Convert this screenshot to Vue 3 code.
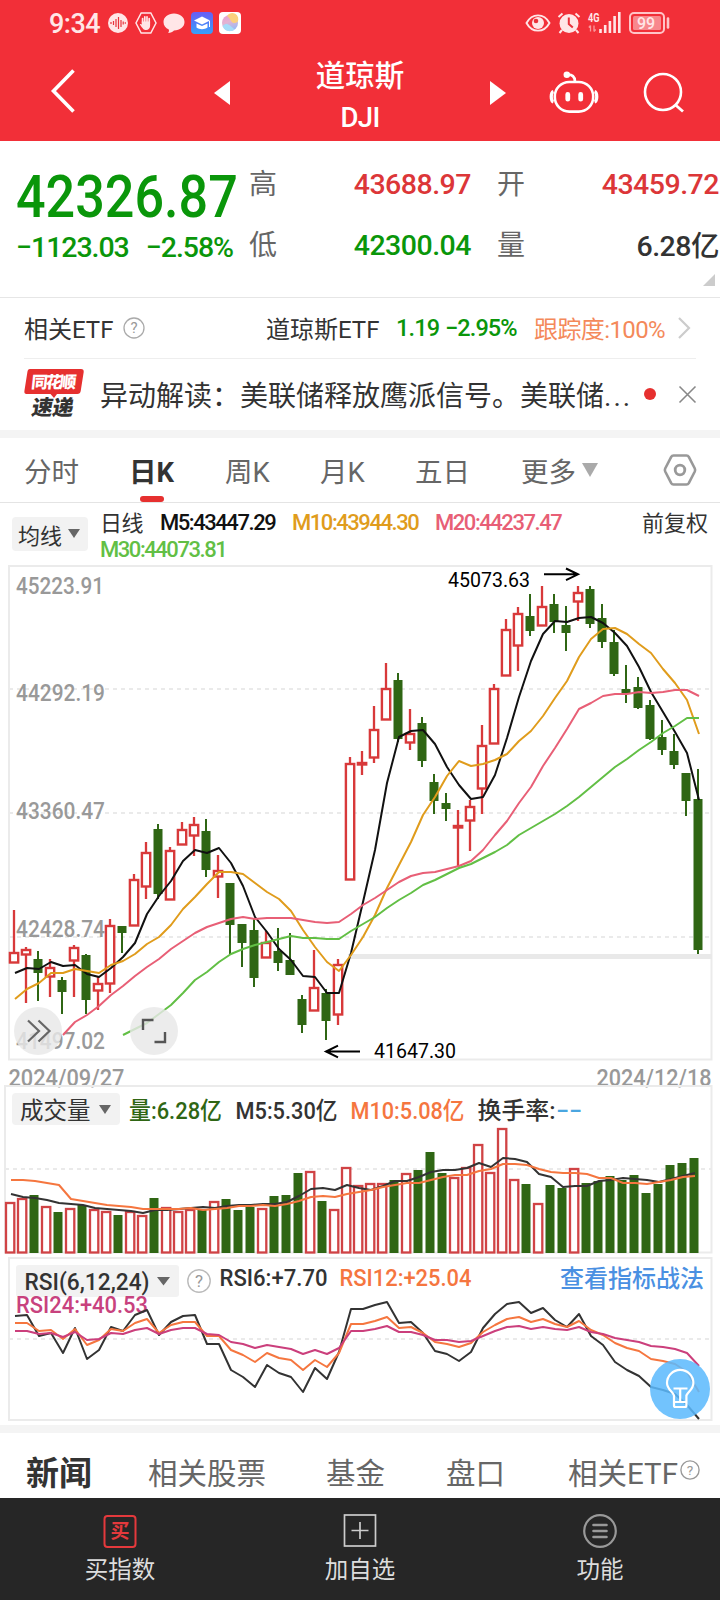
<template>
  <div class="page">
    <header class="header">
      <div class="status">
        <span class="time">9:34</span>
        <svg class="ico-wave" width="20" height="22" viewBox="0 0 20 22">
          <circle cx="10" cy="11" r="10" fill="#ffe6e7" />
          <path d="M3 10v2M5.5 9v4M8 7v8M10.500 5v12M13 8v7M15.200 9.500v3M17.300 10.300v1.400" stroke="#e8323b" stroke-width="1.200" />
        </svg>
        <svg class="ico-hand" width="22" height="22" viewBox="0 0 22 22">
          <path d="M6.2 1h9.6L21 11l-5.2 10H6.2L1 11z" fill="none" stroke="#ffe6e7" stroke-width="1.5" />
          <path d="M7.6 11V6.5M9.8 10V4.8M12 10V4.8M14.2 11V6.5" stroke="#ffe6e7" stroke-width="1.7" stroke-linecap="round" />
          <path d="M6.8 9.5h8.3v4.2c0 2.4-1.6 4.3-4 4.3-2.3 0-3.3-1.4-6.2-5.6.7-.9 1.3-.5 1.9.2z" fill="#ffe6e7" />
        </svg>
        <svg class="ico-chat" width="22" height="22" viewBox="0 0 22 22">
          <path d="M11 1.5c6 0 10.500 3.600 10.500 8.500s-4.500 8.500-10.500 8.500c-1.300 1.400-3.300 2.300-6 2.500 1-1 1.200-2.200.8-3.500C2.500 16.200.5 13.500.5 10 .5 5.100 5 1.500 11 1.500z" fill="#ffe6e7" />
        </svg>
        <svg class="ico-app" width="22" height="22" viewBox="0 0 22 22">
          <defs>
            <linearGradient id="cap" x1="0" y1="0" x2="0" y2="1">
              <stop offset="0" stop-color="#6a5cf5" />
              <stop offset="1" stop-color="#35a0fa" />
            </linearGradient>
            <linearGradient id="ball" x1="0" y1="0" x2="0.4" y2="1">
              <stop offset="0" stop-color="#e99ad0" />
              <stop offset=".5" stop-color="#e3b4d2" />
              <stop offset="1" stop-color="#9db9f4" />
            </linearGradient>
          </defs>
          <rect width="22" height="22" rx="4" fill="url(#cap)" />
          <path d="M11 4.500l8 4-8 4-8-4z" fill="#fff" />
          <path d="M5.500 11.500l5.500 2.500 5.500-2.500v4c-3 2.300-8 2.300-11 0zM18 9h1v6h-1z" fill="#fff" />
        </svg>
        <svg class="ico-app" width="22" height="22" viewBox="0 0 22 22">
          <rect width="22" height="22" rx="4" fill="#fff" />
          <circle cx="11" cy="11" r="8" fill="url(#ball)" />
          <path d="M8 4a6 6 0 0 1 10.500 6c-2 1-3.500 1.500-5 .5-2-1.500-2-3.500-5.500-6.500z" fill="#fbd07e" />
          <path d="M3.500 14c3-3 5-2.500 7.500-.5s4 3.500 4.500 4c-4 3-10 2-12-3.500z" fill="#a5dcf8" />
        </svg>
        <span class="grow"></span>
        <svg class="ico-eye" width="26" height="20" viewBox="0 0 26 20">
          <path d="M1.500 10C7-.2 19-.2 24.500 10 19 20.200 7 20.200 1.500 10z" fill="none" stroke="#ffe6e7" stroke-width="1.900" />
          <circle cx="13" cy="10" r="6" fill="#ffe6e7" />
          <circle cx="11" cy="8" r="2.300" fill="#e8323b" />
        </svg>
        <svg class="ico-alarm" width="24" height="22" viewBox="0 0 24 22">
          <circle cx="12" cy="11.500" r="9.500" fill="#ffe6e7" />
          <path d="M1.500 5L5.500 1.500M22.500 5l-4-3.500M5 18l-2.500 3M19 18l2.500 3" stroke="#ffe6e7" stroke-width="2" />
          <path d="M11.800 5.500v6.500l4 3.500" fill="none" stroke="#e8323b" stroke-width="2" />
        </svg>
        <svg class="ico-signal" width="34" height="22" viewBox="0 0 34 22">
          <text x="0" y="9.500" class="net" textLength="11.500" lengthAdjust="spacingAndGlyphs">4G</text>
          <path d="M2.500 13.500v6M.800 15.500l1.700-2M6 13.500v6M7.700 17.500L6 19.500" stroke="#f9989c" stroke-width="1.300" />
          <path d="M12.500 17v4M17.200 13v8M21.900 9v12M26.600 4v17M31.300 0v21" stroke="#ffe6e7" stroke-width="2.600" />
        </svg>
        <svg class="ico-battery" width="42" height="22" viewBox="0 0 42 22">
          <rect x="1" y="1" width="34" height="20" rx="4" fill="none" stroke="#ffc4c7" stroke-width="2" />
          <rect x="4" y="4" width="28" height="14" rx="1.500" fill="#f8888d" />
          <text x="8" y="16.500" class="level">99</text>
          <path d="M39 6.500v9" stroke="#ffc4c7" stroke-width="2.600" stroke-linecap="round" />
        </svg>
      </div>
      <div class="nav">
        <svg class="back" width="30" height="50" viewBox="0 0 30 50">
          <path d="M26.500 4.500L6.500 25l20 20.500" fill="none" stroke="#fff" stroke-width="3.600" />
        </svg>
        <svg class="prev" width="16" height="24" viewBox="0 0 16 24"><path d="M16 0v24L0 12z" fill="#fff" /></svg>
        <div class="title">
          <div class="name">道琼斯</div>
          <div class="code">DJI</div>
        </div>
        <svg width="16" height="24" viewBox="0 0 16 24"><path d="M0 0v24l16-12z" fill="#fff" /></svg>
        <svg class="robot" width="50" height="46" viewBox="0 0 52 48">
          <rect x="6" y="13.500" width="40" height="31" rx="15" fill="none" stroke="#fff" stroke-width="2.700" />
          <path d="M4.500 23.500c-3 1-3 10 0 11M47.500 23.500c3 1 3 10 0 11" fill="none" stroke="#fff" stroke-width="3.400" />
          <path d="M19 6c5-.5 8 2 8 7" fill="none" stroke="#fff" stroke-width="2.800" />
          <circle cx="18.500" cy="6" r="3.400" fill="#fff" />
          <path d="M19.500 26.500v5M33 26.500v5" stroke="#fff" stroke-width="5" stroke-linecap="round" />
        </svg>
        <svg class="search" width="44" height="44" viewBox="0 0 44 44">
          <circle cx="21" cy="21" r="18" fill="none" stroke="#fff" stroke-width="2.600" />
          <path d="M33 33.500l8 7" stroke="#fff" stroke-width="2.800" />
        </svg>
      </div>
    </header>

    <section class="quote">
      <div class="price-col">
        <div class="price">42326.87</div>
        <div class="change"><span>−1123.03</span><span class="pct">−2.58%</span></div>
      </div>
      <div class="stats">
        <span class="key">高</span><span class="val red">43688.97</span>
        <span class="key">开</span><span class="val red">43459.72</span>
        <span class="key">低</span><span class="val green">42300.04</span>
        <span class="key">量</span><span class="val dark">6.28亿</span>
      </div>
      <i class="corner"></i>
    </section>

    <section class="etf">
      <span class="etf-label">相关ETF</span>
      <svg class="help" width="22" height="22" viewBox="0 0 22 22">
        <circle cx="11" cy="11" r="10" fill="none" stroke="#aaa" stroke-width="1.300" />
        <text x="11" y="16" class="q">?</text>
      </svg>
      <span class="etf-name">道琼斯ETF</span>
      <span class="etf-num green">1.19</span>
      <span class="etf-pct green">−2.95%</span>
      <span class="etf-track">跟踪度:100%</span>
      <svg class="chev" width="14" height="22" viewBox="0 0 14 22">
        <path d="M1 1l10 10-10 10" fill="none" stroke="#ccc" stroke-width="2.200" />
      </svg>
    </section>

    <section class="news">
      <svg class="logo" width="60" height="52" viewBox="0 0 60 52">
        <path d="M6 1h51q3 0 2.700 3l-3 19q-.4 3-3.500 3H33l-3 4-3.500-4H2.500Q0 26 .400 23l3-19Q3.700 1 6 1z" fill="#e6302f" />
        <text x="0" y="20.500" class="logo-a" transform="translate(9 0) skewX(-6)" textLength="45">同花顺</text>
        <text x="0" y="47.500" class="logo-b" transform="translate(15 0) skewX(-10)" textLength="42">速递</text>
      </svg>
      <p class="headline">异动解读：美联储释放鹰派信号。美联储<span class="more">...</span></p>
      <i class="dot"></i>
      <svg width="17" height="17" viewBox="0 0 17 17"><path d="M.500.500l16 16M16.500.500l-16 16" stroke="#888" stroke-width="1.600" /></svg>
    </section>

    <nav class="periods">
      <span v-for="p in periods" :key="p.name" :class="['period', p.cls]">{{ p.name }}</span>
      <i class="tri gray"></i>
      <svg class="gear" width="34" height="32" viewBox="0 0 34 32">
        <path d="M10.500 1.500h13q1.500 0 2.300 1.400l6 11.600q.700 1.500 0 3l-6 11.600q-.800 1.400-2.300 1.400h-13q-1.500 0-2.300-1.400l-6-11.600q-.700-1.500 0-3l6-11.600q.800-1.400 2.300-1.400z" fill="none" stroke="#999" stroke-width="2.600" />
        <circle cx="17" cy="16" r="4.800" fill="none" stroke="#999" stroke-width="2.800" />
      </svg>
    </nav>

    <section class="ma-bar">
      <span class="select">均线<i class="tri"></i></span>
      <div class="ma-list">
        <span class="ma-day">日线</span>
        <span class="ma-5">M5:43447.29</span>
        <span class="ma-10">M10:43944.30</span>
        <span class="ma-20">M20:44237.47</span>
        <span class="ma-30">M30:44073.81</span>
      </div>
      <span class="adjust">前复权</span>
    </section>

    <section class="panel">
      <svg class="chart" width="720" height="521" viewBox="0 564 720 521">
        <path d="M9 689H711M9 813H711M9 937H711" class="grid" />
        <rect x="9" y="566" width="702.500" height="493.500" class="frame" />
        <text v-for="l in priceLabels" :key="l.text" x="16" :y="l.y" class="axis" :textLength="l.w" lengthAdjust="spacingAndGlyphs">{{ l.text }}</text>
        <path d="M348 956.500H712" stroke="#e9e9e9" stroke-width="5" />
        <g v-for="(c, i) in candles" :key="i">
          <template v-if="c[0]">
            <path :d="`M${14 + i * 12} ${c[1]}V${c[2]}M${14 + i * 12} ${c[3]}V${c[4]}`" stroke="#d8393a" stroke-width="2.300" />
            <rect :x="9.900 + i * 12" :y="c[2] + 1" width="8.300" :height="Math.max(c[3] - c[2] - 1.500, 1)" fill="#fff" stroke="#d8393a" stroke-width="2.400" />
          </template>
          <template v-else>
            <path :d="`M${14 + i * 12} ${c[1]}V${c[4]}`" stroke="#2f6614" stroke-width="2" />
            <rect :x="9.500 + i * 12" :y="c[2]" width="9" :height="c[3] - c[2]" fill="#2f6614" />
          </template>
        </g>
        <polyline v-for="m in priceLines" :key="m.color" :points="points(m.data, 15, m.from)" :stroke="m.color" class="line" />
        <text x="448" y="586.500" class="mark" textLength="82" lengthAdjust="spacingAndGlyphs">45073.63</text>
        <path d="M544 574.300h33M566 568.500l12 5.800-12 5.800" class="arrow" />
        <text x="374" y="1058" class="mark" textLength="82" lengthAdjust="spacingAndGlyphs">41647.30</text>
        <path d="M360 1051.500h-33M338 1045.700l-12 5.800 12 5.800" class="arrow" />
        <circle cx="38" cy="1031" r="24" class="fab" />
        <path d="M28 1020.500l11 10.500-11 10.500M38.500 1020.500l11 10.500-11 10.500" fill="none" stroke="#666" stroke-width="2.200" />
        <circle cx="154" cy="1031" r="24" class="fab" />
        <path d="M143 1030v-10h10.500M165 1032v10h-10.500" fill="none" stroke="#555" stroke-width="2.400" />
        <text x="8.500" y="1085.500" class="axis" textLength="116" lengthAdjust="spacingAndGlyphs">2024/09/27</text>
        <text x="596.500" y="1085.500" class="axis" textLength="115" lengthAdjust="spacingAndGlyphs">2024/12/18</text>
      </svg>
    </section>

    <section class="panel">
      <svg class="chart" width="720" height="170" viewBox="0 1085 720 170">
        <path d="M5 1169H711" class="grid" />
        <rect x="5" y="1086" width="706.500" height="166.500" class="frame" />
        <template v-for="(v, i) in volumes" :key="i">
          <rect v-if="isUp(i)" :x="6 + i * 12" :y="v + 1" width="8.300" :height="1251.500 - v" fill="#fff" stroke="#d04345" stroke-width="2.300" />
          <rect v-else :x="5.500 + i * 12" :y="v" width="9" :height="1253 - v" fill="#2f6614" />
        </template>
        <polyline :points="points(vol5, 11, 0)" stroke="#333" class="line" />
        <polyline :points="points(vol10, 11, 0)" stroke="#f5763f" class="line" />
        <text x="129" y="1118.500" class="legend" fill="#2f6614" textLength="93" lengthAdjust="spacingAndGlyphs">量:6.28亿</text>
        <text x="235.500" y="1118.500" class="legend" fill="#333" textLength="102" lengthAdjust="spacingAndGlyphs">M5:5.30亿</text>
        <text x="350.500" y="1118.500" class="legend" fill="#f5763f" textLength="114" lengthAdjust="spacingAndGlyphs">M10:5.08亿</text>
        <text x="477.500" y="1118.500" class="legend" fill="#333" textLength="78" lengthAdjust="spacingAndGlyphs">换手率:</text>
        <text x="556" y="1118.500" class="legend" fill="#4aa6e0" textLength="26" lengthAdjust="spacingAndGlyphs">−−</text>
      </svg>
      <span class="select vol-select">成交量<i class="tri"></i></span>
    </section>

    <section class="panel">
      <svg class="chart" width="720" height="170" viewBox="0 1255 720 170">
        <path d="M9 1339H711" class="grid" />
        <rect x="9" y="1258" width="702.500" height="162" class="frame" />
        <rect x="16" y="1265" width="163" height="32" rx="3" fill="#f2f2f2" />
        <text x="24.500" y="1290" class="legend" fill="#333" textLength="125" lengthAdjust="spacingAndGlyphs">RSI(6,12,24)</text>
        <path d="M157 1277h13l-6.500 8.500z" fill="#666" />
        <circle cx="199" cy="1281" r="11.200" fill="none" stroke="#bbb" stroke-width="1.400" />
        <text x="199" y="1287" class="q big">?</text>
        <text x="219.500" y="1286" class="legend" fill="#333" textLength="108" lengthAdjust="spacingAndGlyphs">RSI6:+7.70</text>
        <text x="339.500" y="1286" class="legend" fill="#f5763f" textLength="132" lengthAdjust="spacingAndGlyphs">RSI12:+25.04</text>
        <text x="560" y="1286.500" class="legend" fill="#4a90e2" textLength="144">查看指标战法</text>
        <text x="16" y="1313" class="legend" fill="#c8427e" textLength="132" lengthAdjust="spacingAndGlyphs">RSI24:+40.53</text>
        <polyline :points="points(rsi6, 15, 0)" stroke="#333" class="line" />
        <polyline :points="points(rsi12, 15, 0)" stroke="#f5763f" class="line" />
        <polyline :points="points(rsi24, 15, 0)" stroke="#cb3f7c" class="line" />
        <circle cx="680" cy="1389" r="30" fill="#5bb9fd" fill-opacity=".86" />
        <path d="M674 1395.500c-1-4-7-6-7-12.500a13.200 13.200 0 0 1 26.400 0c0 6.500-5.500 8.500-7 12.500v10q0 1.500-1.500 1.500h-9.400q-1.500 0-1.500-1.500zM674 1402h12.500M680.200 1388.500v13M673.500 1388.500h14" fill="none" stroke="#fff" stroke-width="2.200" />
      </svg>
    </section>

    <nav class="tabs">
      <span v-for="t in tabs" :key="t.name" :class="t.cls">{{ t.name }}</span>
      <svg width="20" height="20" viewBox="0 0 22 22">
        <circle cx="11" cy="11" r="10" fill="none" stroke="#999" stroke-width="1.500" />
        <text x="11" y="16.500" class="q">?</text>
      </svg>
    </nav>

    <footer class="bottom">
      <div class="action">
        <svg width="34" height="34" viewBox="0 0 34 34">
          <rect x="1.500" y="2" width="31" height="31" rx="3" fill="none" stroke="#e4393c" stroke-width="2" />
          <text x="17" y="24" class="buy">买</text>
        </svg>
        <span>买指数</span>
      </div>
      <div class="action">
        <svg width="34" height="34" viewBox="0 0 34 34">
          <rect x="1.500" y="1" width="31" height="31" fill="none" stroke="#ccc" stroke-width="1.700" />
          <path d="M17 8v17M8.500 16.500h17" stroke="#ccc" stroke-width="1.700" />
        </svg>
        <span>加自选</span>
      </div>
      <div class="action">
        <svg width="34" height="34" viewBox="0 0 34 34">
          <circle cx="17" cy="17" r="15.800" fill="none" stroke="#999" stroke-width="2.200" />
          <path d="M10.500 11h13M10.500 17h13M10.500 23h13" stroke="#999" stroke-width="2.600" stroke-linecap="round" />
        </svg>
        <span>功能</span>
      </div>
    </footer>
  </div>
</template>

<script setup>
const periods = [
  { name: '分时', cls: 'p1' },
  { name: '日K', cls: 'p2 on' },
  { name: '周K', cls: 'p3' },
  { name: '月K', cls: 'p4' },
  { name: '五日', cls: 'p5' },
  { name: '更多', cls: 'p6' }
]

const tabs = [
  { name: '新闻', cls: 't1' },
  { name: '相关股票', cls: 't2' },
  { name: '基金', cls: 't3' },
  { name: '盘口', cls: 't4' },
  { name: '相关ETF', cls: 't5' }
]

const priceLabels = [
  { text: '45223.91', y: 594, w: 88 },
  { text: '44292.19', y: 701, w: 89 },
  { text: '43360.47', y: 819, w: 89 },
  { text: '42428.74', y: 937, w: 89 },
  { text: '41497.02', y: 1049, w: 89 }
]

// [涨, 最高, 实体上, 实体下, 最低]
const candles = [
  [1, 910, 952, 963, 963], [1, 947, 949, 955, 1003], [0, 951, 959, 973, 1001], [1, 959, 967, 977, 997],
  [0, 977, 980, 992, 1014], [1, 945, 947, 961, 997], [0, 954, 955, 1000, 1014], [1, 977, 983, 991, 1010],
  [1, 919, 925, 984, 993], [0, 926, 926, 933, 953], [1, 874, 879, 926, 926], [1, 842, 852, 887, 899],
  [0, 824, 829, 894, 899], [1, 847, 850, 900, 900], [1, 822, 829, 845, 845], [1, 817, 824, 836, 856],
  [0, 819, 831, 870, 877], [1, 855, 870, 877, 898], [0, 883, 883, 925, 954], [0, 924, 924, 943, 967],
  [0, 919, 930, 978, 987], [1, 931, 942, 958, 958], [0, 928, 951, 963, 971], [0, 933, 960, 975, 975],
  [0, 995, 999, 1025, 1033], [1, 950, 987, 1011, 1011], [0, 989, 993, 1021, 1040], [1, 959, 964, 1015, 1025],
  [1, 757, 763, 880, 880], [1, 751, 762, 765, 775], [1, 706, 729, 758, 763], [1, 663, 688, 720, 720],
  [0, 673, 680, 739, 742], [1, 709, 733, 743, 750], [0, 717, 723, 761, 767], [0, 774, 782, 801, 814],
  [0, 793, 803, 809, 821], [1, 810, 825, 828, 866], [1, 800, 806, 821, 851], [1, 725, 745, 789, 814],
  [1, 684, 688, 744, 744], [1, 619, 629, 676, 676], [1, 607, 613, 646, 671], [0, 594, 616, 631, 636],
  [1, 586, 606, 626, 626], [0, 594, 604, 622, 633], [0, 606, 625, 633, 651], [1, 586, 592, 602, 621],
  [0, 586, 589, 624, 628], [0, 604, 618, 642, 648], [0, 630, 642, 674, 676], [0, 665, 689, 693, 703],
  [0, 677, 687, 708, 709], [0, 700, 705, 739, 740], [0, 720, 737, 750, 755], [0, 734, 751, 765, 769],
  [0, 773, 773, 801, 816], [0, 769, 799, 950, 954]
]

const ma5 = [973, 968, 969, 962, 966, 965, 974, 977, 968, 957, 943, 914, 896, 881, 861, 850, 853, 848, 863, 886, 917, 932, 949, 960, 976, 977, 993, 993, 953, 902, 850, 783, 737, 731, 730, 744, 767, 785, 799, 797, 775, 738, 697, 661, 634, 621, 622, 618, 617, 623, 633, 646, 667, 692, 712, 732, 753, 800]
const ma10 = [999, 989, 983, 973, 973, 969, 971, 973, 965, 961, 954, 944, 937, 925, 909, 897, 884, 872, 872, 874, 883, 892, 899, 911, 930, 947, 962, 971, 955, 937, 915, 888, 865, 842, 815, 797, 776, 761, 766, 764, 760, 754, 741, 731, 716, 698, 681, 657, 639, 629, 628, 634, 644, 653, 669, 683, 700, 734]
const ma20 = [1035, 1022, 1015, 1006, 995, 986, 976, 967, 959, 949, 941, 933, 927, 923, 919, 917, 919, 918, 918, 918, 920, 922, 923, 922, 914, 905, 898, 890, 882, 876, 873, 872, 869, 866, 861, 850, 835, 821, 803, 787, 766, 748, 729, 709, 703, 696, 694, 694, 692, 693, 692, 690, 690, 696]
const ma30 = [1035, 1029, 1023, 1014, 1005, 993, 980, 972, 962, 954, 949, 945, 942, 939, 936, 938, 938, 939, 939, 931, 924, 917, 908, 900, 893, 885, 880, 874, 868, 864, 858, 852, 845, 835, 828, 821, 814, 806, 797, 787, 777, 767, 759, 750, 742, 733, 726, 718, 718]

const priceLines = [
  { color: '#111', data: ma5, from: 0 },
  { color: '#e09c1c', data: ma10, from: 0 },
  { color: '#e85f76', data: ma20, from: 4 },
  { color: '#62bf45', data: ma30, from: 9 }
]

const volumes = [1202, 1198, 1195, 1206, 1212, 1208, 1205, 1209, 1211, 1215, 1211, 1215, 1198, 1207, 1211, 1209, 1210, 1201, 1199, 1210, 1207, 1208, 1196, 1195, 1173, 1171, 1201, 1209, 1167, 1185, 1183, 1183, 1180, 1173, 1170, 1152, 1173, 1177, 1167, 1144, 1172, 1128, 1179, 1184, 1203, 1185, 1188, 1168, 1183, 1181, 1176, 1180, 1175, 1193, 1184, 1165, 1163, 1158]
const vol5 = [1194, 1197, 1198, 1200, 1203, 1204, 1205, 1208, 1209, 1210, 1211, 1213, 1210, 1210, 1209, 1208, 1207, 1208, 1206, 1205, 1205, 1204, 1204, 1202, 1196, 1189, 1188, 1190, 1185, 1188, 1190, 1186, 1181, 1181, 1177, 1172, 1170, 1170, 1168, 1163, 1167, 1158, 1159, 1162, 1174, 1177, 1187, 1186, 1186, 1181, 1180, 1178, 1179, 1180, 1182, 1179, 1176, 1173]
const vol10 = [1180, 1180, 1181, 1183, 1185, 1199, 1201, 1203, 1205, 1206, 1207, 1209, 1209, 1209, 1209, 1208, 1210, 1209, 1208, 1206, 1206, 1205, 1206, 1204, 1201, 1197, 1196, 1197, 1194, 1192, 1190, 1187, 1185, 1183, 1183, 1180, 1177, 1175, 1175, 1171, 1169, 1164, 1164, 1165, 1169, 1172, 1173, 1173, 1174, 1178, 1178, 1183, 1183, 1184, 1182, 1180, 1177, 1176]

const rsi6 = [1316, 1315, 1336, 1333, 1353, 1328, 1359, 1350, 1327, 1331, 1315, 1310, 1335, 1322, 1316, 1315, 1344, 1344, 1370, 1377, 1387, 1365, 1373, 1377, 1392, 1368, 1379, 1352, 1309, 1309, 1305, 1302, 1323, 1322, 1333, 1351, 1354, 1361, 1352, 1328, 1314, 1304, 1302, 1313, 1308, 1320, 1327, 1314, 1336, 1345, 1362, 1370, 1376, 1387, 1390, 1394, 1405, 1419]
const rsi12 = [1323, 1323, 1331, 1330, 1339, 1329, 1345, 1340, 1329, 1331, 1323, 1319, 1333, 1325, 1322, 1322, 1336, 1336, 1350, 1355, 1362, 1353, 1358, 1360, 1370, 1360, 1367, 1353, 1324, 1324, 1321, 1317, 1328, 1327, 1333, 1342, 1344, 1347, 1343, 1332, 1325, 1319, 1317, 1322, 1319, 1324, 1327, 1321, 1330, 1335, 1343, 1348, 1351, 1359, 1361, 1364, 1372, 1392]
const rsi24 = [1331, 1331, 1334, 1333, 1337, 1332, 1340, 1339, 1333, 1334, 1330, 1328, 1334, 1330, 1328, 1328, 1334, 1335, 1342, 1344, 1348, 1345, 1347, 1349, 1354, 1350, 1354, 1348, 1331, 1331, 1329, 1326, 1332, 1332, 1335, 1340, 1340, 1342, 1341, 1336, 1331, 1327, 1326, 1329, 1327, 1329, 1330, 1327, 1332, 1334, 1338, 1340, 1342, 1346, 1347, 1349, 1353, 1366]

const upVolumes = [0, 1, 3, 5, 7, 8, 10, 11, 13, 14, 15, 17, 21, 25, 27, 28, 29, 30, 31, 33, 37, 38, 39, 40, 41, 42, 44, 47]
const isUp = (i) => upVolumes.includes(i)

const points = (data, start, from) => data.map((y, i) => `${start + (i + from) * 12},${y}`).join(' ')
</script>

<style>
body {
  background: #fff;
}
</style>

<style scoped>
.page {
  width: 720px;
  height: 1600px;
  overflow: hidden;
  display: flex;
  flex-direction: column;
  background: #fff;
  color: #333;
  font-family: Roboto, "Noto Sans CJK SC", sans-serif;
  white-space: nowrap;
}
svg {
  display: block;
  flex: none;
  overflow: visible;
}
i {
  display: block;
  flex: none;
}
.red { color: #dc3638; }
.green { color: #0a960a; }
.dark { color: #333; }
.header {
  height: 141px;
  background: #f22f38;
  color: #fff;
}
.status {
  display: flex;
  align-items: center;
  height: 46px;
  padding: 0 49px;
}
.time {
  width: 59px;
  padding-top: 1px;
  font-size: 27px;
  font-weight: 500;
  color: #ffe6e7;
  letter-spacing: -0.500px;
}
.ico-hand { margin-left: 7px; }
.ico-chat { margin-left: 6px; }
.ico-app { margin-left: 6px; }
.grow { flex: 1; }
.ico-alarm { margin-left: 6px; }
.ico-signal { margin-left: 7px; }
.ico-battery { margin-left: 7px; }
.net {
  font-size: 12px;
  font-weight: 700;
  fill: #ffe6e7;
}
.level {
  font-size: 16px;
  font-weight: 500;
  fill: #ffe6e7;
}
.nav {
  display: flex;
  align-items: center;
  height: 93px;
  padding-left: 47px;
}
.back { margin-bottom: 3px; }
.prev { margin-left: 137px; }
.title {
  width: 260px;
  padding-top: 9px;
  text-align: center;
}
.name {
  font-size: 29.500px;
  line-height: 42px;
  font-weight: 500;
}
.code {
  font-size: 27.500px;
  line-height: 42px;
  font-weight: 500;
  letter-spacing: -0.600px;
}
.robot {
  margin: 0 0 2px 43px;
}
.search { margin-left: 43px; }

.quote {
  position: relative;
  display: flex;
  box-sizing: border-box;
  height: 157px;
  border-bottom: 1px solid #e6e6e6;
}
.price-col {
  width: 232px;
  padding: 24px 0 0 16px;
  color: #0a960a;
}
.price {
  font-size: 59px;
  line-height: 64px;
  font-weight: 500;
  transform: scaleX(0.883);
  transform-origin: left;
}
.change {
  display: flex;
  font-size: 28.500px;
  line-height: 40px;
  margin-top: -1px;
  letter-spacing: -1.050px;
  font-weight: 500;
}
.pct {
  margin-left: 17px;
}
.stats {
  display: grid;
  grid-template-columns: 30px 193px 56px 192px;
  grid-template-rows: 61px 61px;
  padding: 14px 0 0 1px;
  align-items: center;
}
.key {
  margin-bottom: 6px;
  font-size: 28px;
  color: #666;
}
.key:nth-child(4n + 3) {
  padding-left: 25px;
}
.val {
  margin: 0 1px 1px 0;
  font-size: 28.500px;
  font-weight: 500;
  text-align: right;
  letter-spacing: -0.500px;
}
.val.dark { margin-bottom: 6px; }
.corner {
  position: absolute;
  right: 5px;
  bottom: 11px;
  border-left: 12px solid transparent;
  border-bottom: 12px solid #ccc;
}

.etf {
  display: flex;
  align-items: center;
  box-sizing: border-box;
  height: 61px;
  margin: 0 24px;
  border-bottom: 1px solid #eee;
  font-size: 24px;
}
.etf-label {
  width: 99px;
}
.etf-name {
  width: 130px;
  margin-left: 121px;
}
.etf-num {
  width: 49px;
  font-size: 23.500px;
  letter-spacing: -0.800px;
  font-weight: 500;
}
.etf-pct {
  width: 89px;
  font-size: 23.500px;
  letter-spacing: -0.900px;
  font-weight: 500;
}
.etf-track {
  width: 144px;
  color: #f4895a;
  letter-spacing: -0.600px;
}
.q {
  font-size: 15px;
  text-anchor: middle;
  fill: #999;
}
.big { font-size: 17px; }

.news {
  display: flex;
  align-items: center;
  height: 72px;
  padding: 0 24px;
}
.logo-a {
  font: 900 16.500px "Noto Sans CJK SC", sans-serif;
  fill: #fff;
}
.logo-b {
  font: 900 21px "Noto Sans CJK SC", sans-serif;
  fill: #333;
}
.headline {
  width: 544px;
  margin: 0 0 0 16px;
  font-size: 28px;
}
.more { letter-spacing: 2px; }
.dot {
  width: 12px;
  height: 12px;
  margin-right: 23px;
  border-radius: 50%;
  background: #e6302f;
}

.periods {
  display: flex;
  align-items: center;
  box-sizing: border-box;
  height: 73px;
  padding-left: 24px;
  border-top: 8px solid #f4f4f4;
  border-bottom: 1px solid #e4e4e4;
  font-size: 27.500px;
  color: #666;
}
.period {
  position: relative;
  width: 95px;
}
.p1 { width: 105px; }
.p2 { width: 96px; }
.p4 { width: 96px; }
.p5 { width: 106px; margin-left: -1px; }
.p6 { width: 61px; }
.on {
  color: #333;
  font-weight: 700;
}
.on::after {
  content: "";
  position: absolute;
  left: 11px;
  bottom: -12px;
  width: 24px;
  height: 6px;
  border-radius: 3px;
  background: #e6302f;
}
.tri {
  border: 6px solid transparent;
  border-top: 9px solid #666;
  border-bottom: 0;
}
.gray {
  border-width: 14px 8px 0;
  border-top-color: #aaa;
}
.gear { margin-left: 65px; }

.ma-bar {
  display: flex;
  height: 61px;
  padding-left: 12px;
  font-size: 22px;
}
.select {
  display: flex;
  align-items: center;
  justify-content: space-between;
  box-sizing: border-box;
  width: 76px;
  height: 34px;
  margin-top: 14px;
  padding: 0 8px 1px 6px;
  border-radius: 4px;
  background: #f2f2f2;
}
.ma-list {
  display: grid;
  grid-template-columns: 60px 132px 143px 130px;
  grid-template-rows: 26px 28px;
  align-items: center;
  margin: 6px 0 0 12px;
  font-weight: 500;
  letter-spacing: -1.450px;
}
.ma-day {
  margin-bottom: 3px;
  font-weight: 400;
  letter-spacing: -0.500px;
}
.ma-5 { color: #111; }
.ma-10 { color: #e09c1c; }
.ma-20 { color: #e85f76; }
.ma-30 {
  grid-column: 1 / 3;
  color: #62bf45;
}
.adjust {
  margin: 2px 0 0 77px;
}

.panel {
  position: relative;
}
.grid {
  stroke: #eaeaea;
  stroke-width: 2;
  stroke-dasharray: 4 4;
}
.frame {
  fill: none;
  stroke: #ebebeb;
  stroke-width: 2;
}
.axis {
  font-size: 23.500px;
  font-weight: 500;
  fill: #999;
}
.mark {
  font-size: 20px;
  fill: #000;
}
.line {
  fill: none;
  stroke-width: 2;
  stroke-linejoin: round;
}
.arrow {
  fill: none;
  stroke: #000;
  stroke-width: 2;
}
.fab {
  fill: #e8e8e8;
  fill-opacity: 0.82;
}
.legend {
  font-size: 24px;
  font-weight: 500;
}
.vol-select {
  position: absolute;
  left: 12px;
  top: 8px;
  width: 108px;
  height: 32px;
  margin: 0;
  padding: 0 9px 0 8px;
  font-size: 23.500px;
}

.tabs {
  display: flex;
  align-items: center;
  box-sizing: border-box;
  height: 73px;
  padding: 11px 0 0 26px;
  border-top: 8px solid #f4f4f4;
  font-size: 29.500px;
  color: #666;
}
.tabs svg { margin-bottom: 2px; }
.t1 {
  width: 122px;
  font-size: 33px;
  font-weight: 700;
  color: #333;
}
.t2 { width: 178px; }
.t3 { width: 120px; }
.t4 { width: 122px; }
.t5 { width: 112px; }

.bottom {
  display: grid;
  grid-template-columns: repeat(3, 1fr);
  height: 102px;
  background: #262626;
  color: #ddd;
  font-size: 23.500px;
}
.action {
  display: flex;
  flex-direction: column;
  align-items: center;
  padding-top: 16px;
}
.action span {
  margin-top: 3px;
}
.buy {
  font-size: 19px;
  font-weight: 700;
  text-anchor: middle;
  fill: #e4393c;
}
</style>
